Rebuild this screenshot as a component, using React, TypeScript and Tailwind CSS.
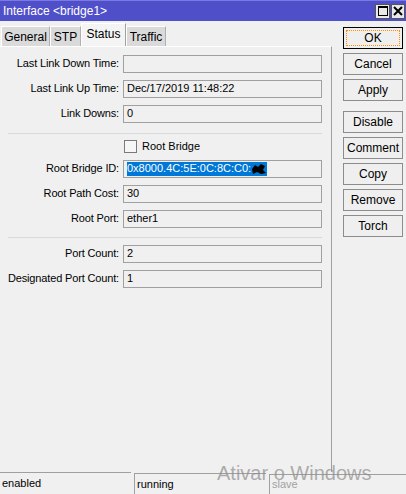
import React from "react"

const Field = ({ label, value }: { label: string; value?: React.ReactNode }) => (
  <div className="flex h-[25px] items-center">
    <span className="w-[123px] pr-[4px] text-right tracking-[-0.15px]">{label}</span>
    <div className="flex h-[18px] w-[199px] items-center border border-[#a0a0a0] bg-[#f0f0f0] pl-[3px]">
      {value}
    </div>
  </div>
)

const Btn = ({ children, focus, className }: { children: string; focus?: boolean; className?: string }) => (
  <button
    className={
      "h-[22px] w-[60px] bg-[#efefef] text-[12px] " +
      (focus ? "border border-black p-[2px] " : "border border-[#8c8c8c] ") +
      (className || "")
    }
  >
    {focus ? (
      <span className="flex h-full w-full items-center justify-center border border-dotted border-[#ff8c00]">
        {children}
      </span>
    ) : (
      children
    )}
  </button>
)

const App = () => {
  const tabs = ["General", "STP", "Status", "Traffic"]

  return (
    <div
      className="relative flex h-[494px] w-[406px] flex-col overflow-hidden bg-[#f0f0f0] text-[11px] leading-none text-black"
      style={{ fontFamily: '"Liberation Sans", Arial, sans-serif' }}
    >
      {/* title bar */}
      <div className="flex h-[21px] items-center justify-between border-t border-[#7a7ae0] bg-[#4f4fc9] pl-[3px] pr-[1px] text-[12px] text-white">
        <span>Interface &lt;bridge1&gt;</span>
        <div className="flex gap-[1px]">
          <div className="flex h-[15px] w-[15px] items-center justify-center border border-[#555] bg-[#e8e8e8]">
            <div className="h-[10px] w-[10px] border border-t-2 border-black" />
          </div>
          <div className="flex h-[15px] w-[14px] items-center justify-center border border-[#555] bg-[#e8e8e8]">
            <svg width="10" height="10" viewBox="0 0 10 10">
              <path d="M1 1 L9 9 M9 1 L1 9" stroke="black" strokeWidth="2" />
            </svg>
          </div>
        </div>
      </div>

      <div className="flex flex-1">
        <div className="flex w-[332px] flex-col">
          {/* tabs */}
          <div className="flex h-[25px] items-end pl-[1px]">
            {tabs.map((t) =>
              t === "Status" ? (
                <div
                  key={t}
                  className="flex h-[23px] w-[45px] items-center justify-center border-l border-r border-t border-l-white border-r-[#a0a0a0] border-t-white bg-[#f4f4f4] pb-[2px] text-[12px]"
                >
                  {t}
                </div>
              ) : (
                <div
                  key={t}
                  className={
                    "flex h-[20px] items-center justify-center border-l border-r border-t border-l-white border-r-[#b0b0b0] border-t-white bg-[#dadada] text-[12px] " +
                    (t === "General" ? "w-[49px]" : t === "STP" ? "w-[31px]" : "w-[40px]")
                  }
                >
                  {t}
                </div>
              )
            )}
          </div>

          {/* panel */}
          <div className="flex-1 border-r border-t border-r-[#a0a0a0] border-t-white pt-[4px]">
            <Field label="Last Link Down Time:" />
            <Field label="Last Link Up Time:" value="Dec/17/2019 11:48:22" />
            <Field label="Link Downs:" value="0" />

            <div className="ml-[8px] mr-[9px] mb-[6px] mt-[7px] h-px bg-[#d8d8d8]" />

            <div className="flex h-[16px] items-start pl-[124px]">
              <div className="flex items-center gap-[5px]">
                <div className="h-[13px] w-[13px] border border-[#7a7a7a] bg-[#f6f6f6]" />
                <span className="text-[11px]">Root Bridge</span>
              </div>
            </div>

            <Field
              label="Root Bridge ID:"
              value={
                <span className="flex h-[14px] items-center bg-[#0078d7] text-white">
                  0x8000.4C:5E:0C:8C:C0:
                  <svg width="16" height="12" viewBox="0 0 16 12">
                    <path d="M1 6 L4 2 L7 4 L10 1 L14 3 L12 7 L15 10 L10 11 L6 9 L2 11 Z" fill="black" />
                  </svg>
                </span>
              }
            />
            <Field label="Root Path Cost:" value="30" />
            <Field label="Root Port:" value="ether1" />

            <div className="ml-[8px] mr-[9px] mb-[3px] mt-[6px] h-px bg-[#d8d8d8]" />

            <Field label="Port Count:" value="2" />
            <Field label="Designated Port Count:" value="1" />
          </div>
        </div>

        {/* buttons */}
        <div className="flex flex-col gap-[4px] pl-[11px] pt-[6px]">
          <Btn focus>OK</Btn>
          <Btn>Cancel</Btn>
          <Btn>Apply</Btn>
          <Btn className="mt-[6px]">Disable</Btn>
          <Btn>Comment</Btn>
          <Btn>Copy</Btn>
          <Btn>Remove</Btn>
          <Btn>Torch</Btn>
        </div>
      </div>

      {/* status bar */}
      <div className="flex h-[22px] gap-[3px] text-[11px]">
        <div className="flex w-[131px] items-center border-t border-[#a0a0a0] pl-[2px]">enabled</div>
        <div className="mt-[1px] flex w-[132px] items-center border-l border-t border-[#a0a0a0] pl-[2px]">running</div>
        <div className="mt-[2px] flex flex-1 items-center border-l border-t border-[#a0a0a0] pl-[2px] text-[#a0a0a0]">
          slave
        </div>
      </div>

      {/* windows watermark */}
      <div className="pointer-events-none absolute left-[217px] top-[463px] text-[20px] text-[#8c8c8c]/70">
        Ativar o Windows
      </div>
    </div>
  )
}

export default App
